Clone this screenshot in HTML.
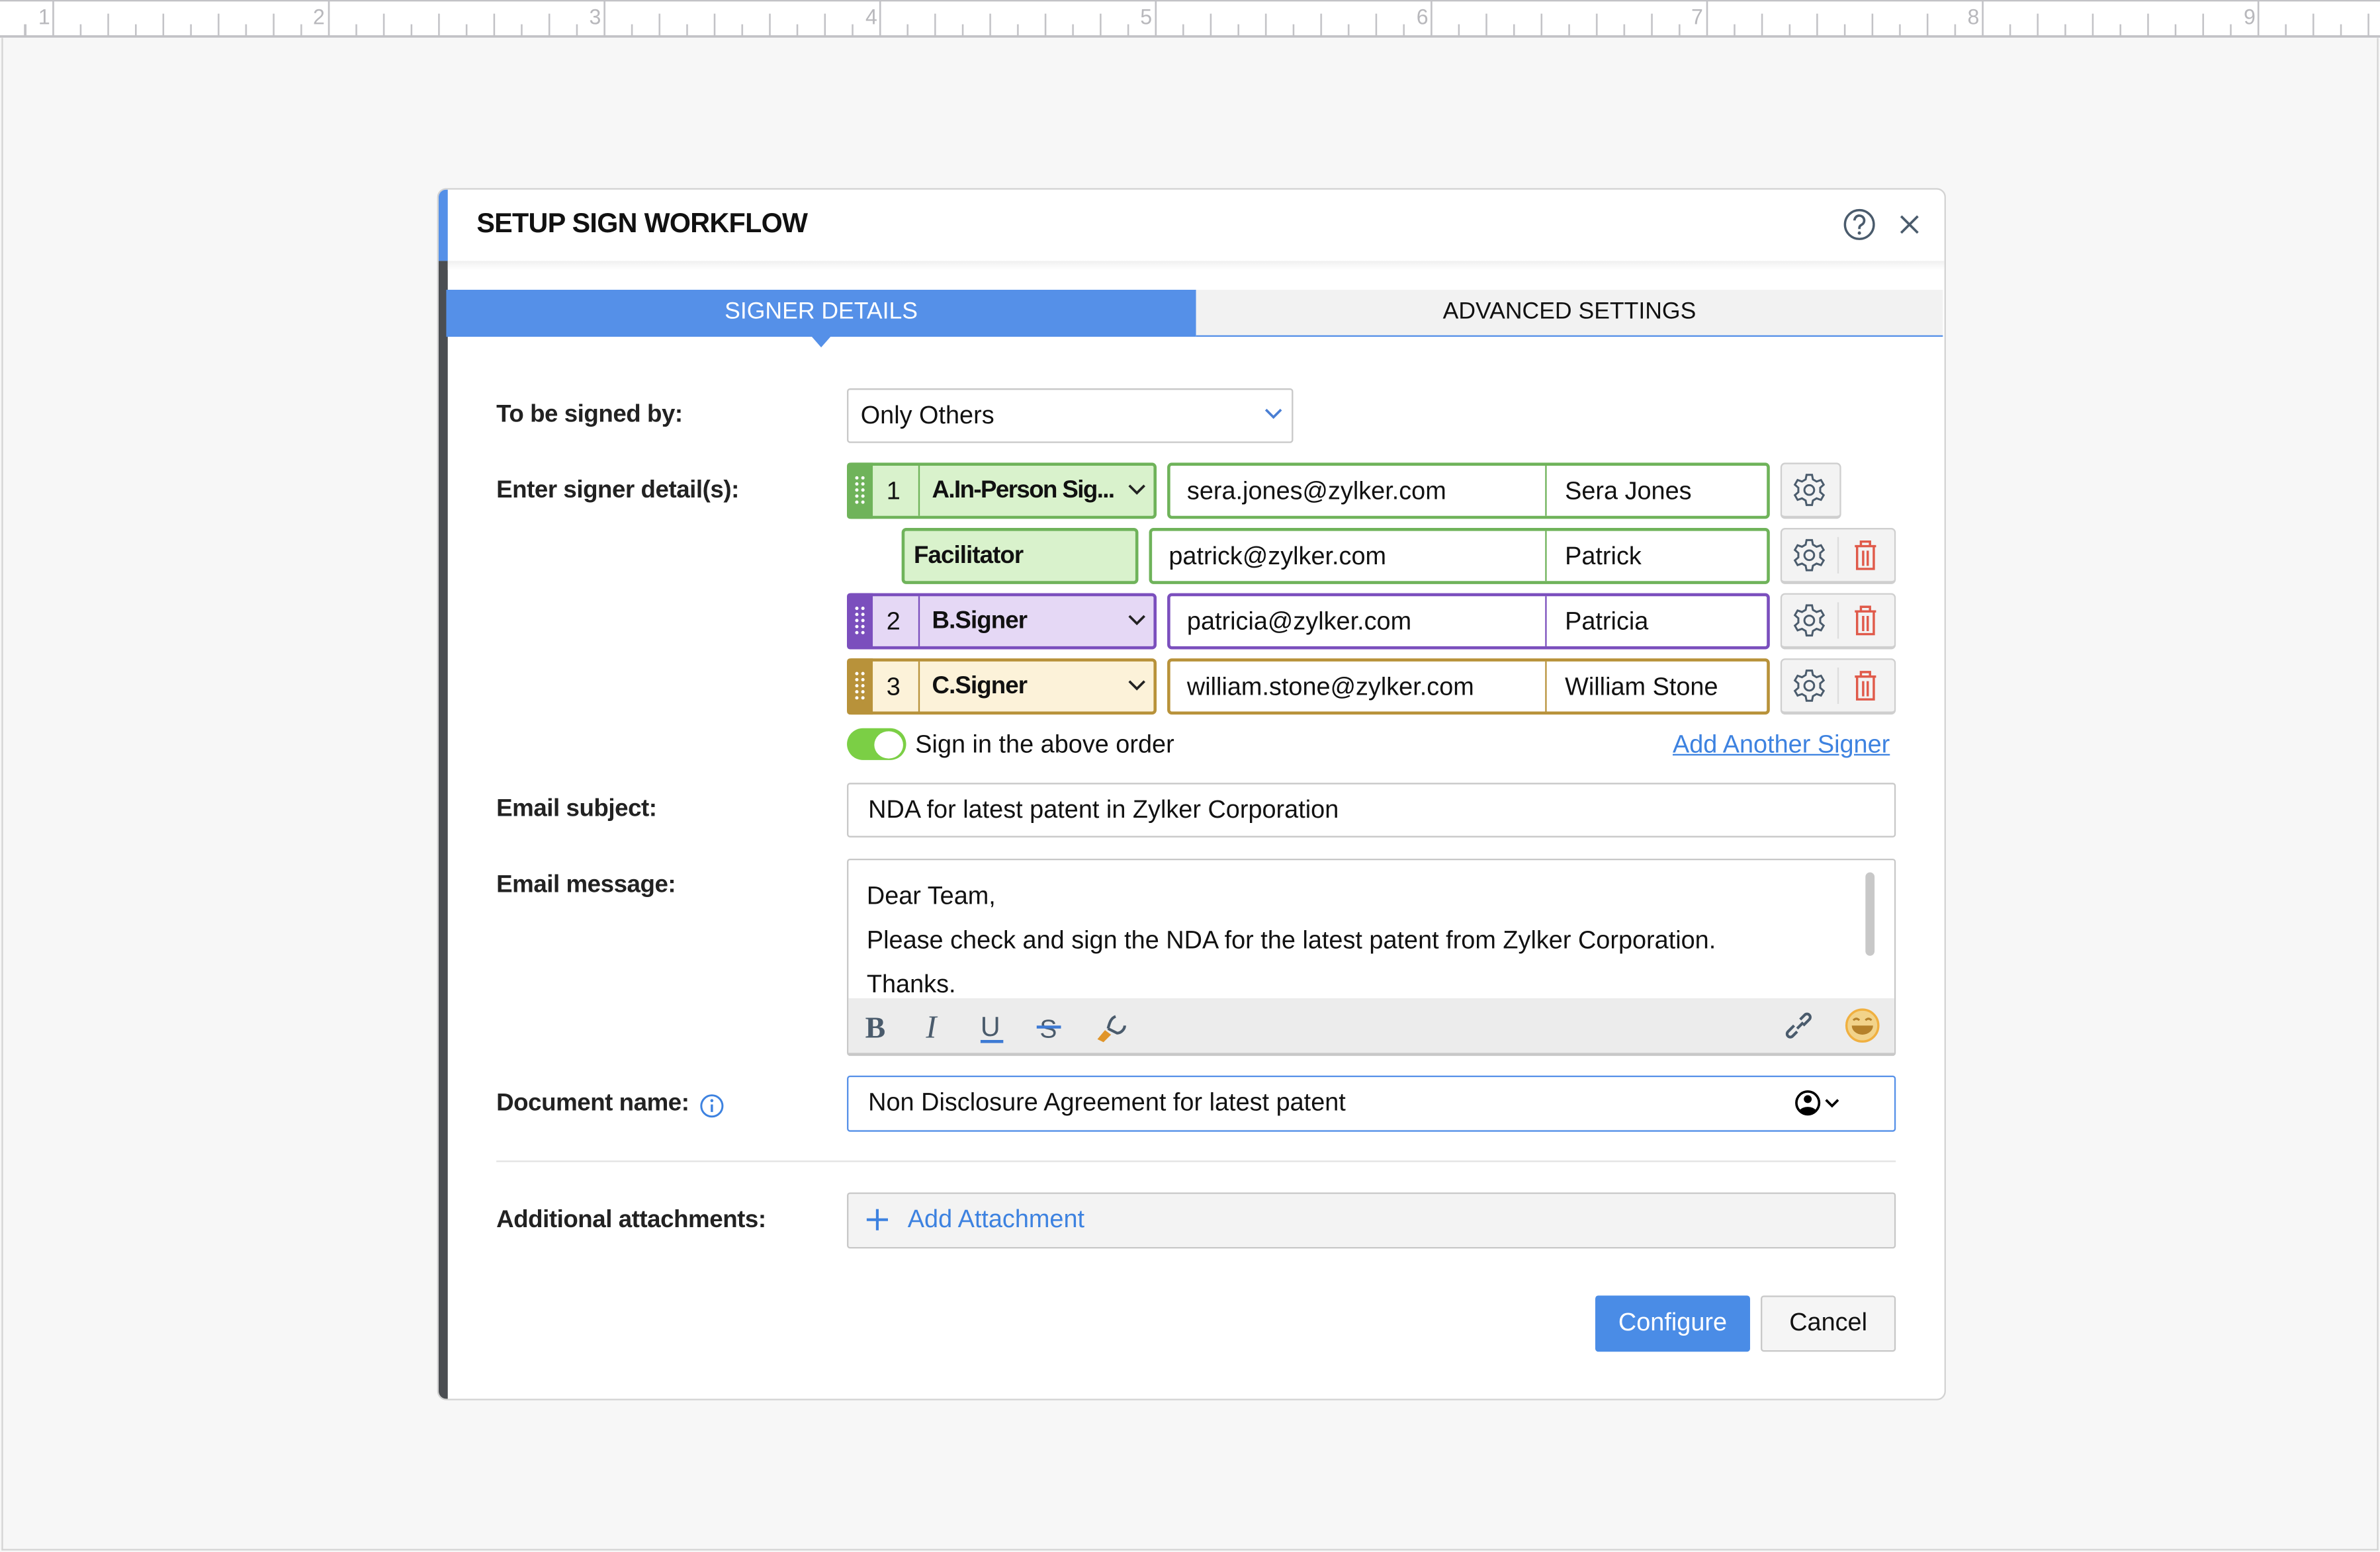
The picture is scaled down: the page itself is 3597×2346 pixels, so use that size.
<!DOCTYPE html>
<html><head><meta charset="utf-8">
<style>
*{box-sizing:border-box;margin:0;padding:0}
html,body{width:3597px;height:2346px;overflow:hidden;background:#f7f7f7}
#s{position:absolute;left:0;top:0;width:1568px;height:1023px;transform:scale(2.294,2.2932);transform-origin:0 0;font-family:"Liberation Sans",sans-serif;color:#111;background:#f7f7f7}
.a{position:absolute}
.lbl{position:absolute;left:327px;font-size:16px;font-weight:bold;color:#222;line-height:20px;letter-spacing:-0.2px}
.box{position:absolute;border:1px solid #c8c8c8;border-radius:2px;background:#fff;font-size:16.5px;line-height:34px;padding-left:13px;color:#111}
.t{position:absolute;font-size:16.5px;line-height:20px;color:#111}
.rb{font-weight:bold;font-size:16px;letter-spacing:-0.4px}
.act{position:absolute;border:1px solid #cfcfcf;border-bottom-width:2px;border-radius:3px;background:#f3f3f3}
</style></head><body><div id="s">
<svg class="a" style="left:0;top:0" width="1568" height="26">
<defs><pattern id="p" x="34.5" y="0" width="181.6" height="26" patternUnits="userSpaceOnUse">
<line x1="0.5" y1="0" x2="0.5" y2="24" stroke="#c2c2c6" stroke-width="1.3"/>
<g stroke="#c2c2c6" stroke-width="1.1">
<line x1="18.66" y1="16" x2="18.66" y2="24"/><line x1="36.8" y1="9" x2="36.8" y2="24"/>
<line x1="55" y1="16" x2="55" y2="24"/><line x1="73.1" y1="9" x2="73.1" y2="24"/>
<line x1="91.3" y1="16" x2="91.3" y2="24"/><line x1="109.5" y1="9" x2="109.5" y2="24"/>
<line x1="127.6" y1="16" x2="127.6" y2="24"/><line x1="145.8" y1="9" x2="145.8" y2="24"/>
<line x1="164" y1="16" x2="164" y2="24"/></g></pattern></defs>
<rect x="0" y="0" width="1568" height="24" fill="#fff"/>
<rect x="0" y="0" width="1568" height="24" fill="url(#p)"/>
<line x1="0" y1="0.5" x2="1568" y2="0.5" stroke="#c2c2c6"/>
<line x1="0" y1="24" x2="1568" y2="24" stroke="#c2c2c6" stroke-width="1.6"/>
<line x1="16.3" y1="16" x2="16.3" y2="24" stroke="#c2c2c6"/>
<g font-family="Liberation Sans" font-size="14" fill="#b8b8bc" text-anchor="end">
<text x="33" y="16">1</text><text x="214" y="16">2</text><text x="396" y="16">3</text><text x="578" y="16">4</text><text x="759" y="16">5</text><text x="941" y="16">6</text><text x="1122" y="16">7</text><text x="1304" y="16">8</text><text x="1486" y="16">9</text></g>
</svg>
<div class="a" style="left:1px;top:25px;width:1566px;height:997px;border:1px solid #d4d4d4;border-top:none"></div>

<div class="a" style="left:288px;top:124px;width:994px;height:799px;background:#fff;border:1px solid #d2d2d2;border-radius:6px;overflow:hidden">
  <div class="a" style="left:0;top:0;width:6px;height:47px;background:#5590e8"></div>
  <div class="a" style="left:0;top:47px;width:6px;height:760px;background:#4b4e52"></div>
  <div class="a" style="left:6px;top:47px;width:990px;height:6px;background:linear-gradient(#f0f0f0,#fff)"></div>
</div>
<div class="t" style="left:314px;top:137px;font-size:18px;font-weight:bold;letter-spacing:-0.3px">SETUP SIGN WORKFLOW</div>
<svg class="a" style="left:1213px;top:136px" width="60" height="24" viewBox="0 0 60 24">
<circle cx="12" cy="12" r="9.5" fill="none" stroke="#4a5b6c" stroke-width="1.5"/>
<path d="M8.8 9.3a3.2 3.2 0 1 1 4.6 2.9c-1 .5-1.4 1.1-1.4 2.2v.6" fill="none" stroke="#4a5b6c" stroke-width="1.6"/>
<circle cx="12" cy="17.6" r="1.1" fill="#4a5b6c"/>
<path d="M39.5 6.5l11 11M50.5 6.5l-11 11" stroke="#4a5b6c" stroke-width="1.6"/>
</svg>

<div class="a" style="left:294px;top:191px;width:494px;height:31px;background:#5590e8;color:#fff;text-align:center;font-size:15.5px;line-height:30px">SIGNER DETAILS</div>
<div class="a" style="left:534px;top:221px;width:0;height:0;border-left:7px solid transparent;border-right:7px solid transparent;border-top:8px solid #5590e8"></div>
<div class="a" style="left:788px;top:191px;width:492px;height:31px;background:#f2f2f2;border-bottom:1.5px solid #5590e8;color:#111;text-align:center;font-size:15.5px;line-height:30px">ADVANCED SETTINGS</div>

<div class="lbl" style="top:264px">To be signed by:</div>
<div class="box" style="left:558px;top:256px;width:294px;height:36px;padding-left:8px">Only Others</div>
<svg class="a" style="left:832px;top:268px" width="14" height="10"><path d="M2 2l5 5 5-5" fill="none" stroke="#4a7fd4" stroke-width="1.6"/></svg>

<div class="lbl" style="top:314px">Enter signer detail(s):</div>

<div class="a" style="left:558px;top:305px;width:204px;height:37px;border:2px solid #6fb35a;border-radius:3px;background:#d9f2cc"></div>
<div class="a" style="left:558px;top:305px;width:17px;height:37px;background:#6fb35a;border-radius:2px 0 0 2px"></div>
<div class="a" style="left:605px;top:307px;width:1px;height:33px;background:#6fb35a"></div>
<div class="t" style="left:584px;top:314px">1</div>
<div class="t rb" style="left:614px;top:314px;letter-spacing:-0.7px">A.In-Person Sig...</div>
<div class="a" style="left:769px;top:305px;width:397px;height:37px;border:2px solid #6fb35a;border-radius:3px"></div>
<div class="a" style="left:1018px;top:307px;width:1px;height:33px;background:#6fb35a"></div>
<div class="t" style="left:782px;top:314px">sera.jones@zylker.com</div>
<div class="t" style="left:1031px;top:314px">Sera Jones</div>
<div class="act" style="left:1173px;top:305px;width:40px;height:37px"></div>
<div class="a" style="left:594px;top:348px;width:156px;height:37px;border:2px solid #6fb35a;border-radius:3px;background:#d9f2cc"></div>
<div class="t rb" style="left:602px;top:357px">Facilitator</div>
<div class="a" style="left:757px;top:348px;width:409px;height:37px;border:2px solid #6fb35a;border-radius:3px"></div>
<div class="a" style="left:1018px;top:350px;width:1px;height:33px;background:#6fb35a"></div>
<div class="t" style="left:770px;top:357px">patrick@zylker.com</div>
<div class="t" style="left:1031px;top:357px">Patrick</div>
<div class="act" style="left:1173px;top:348px;width:76px;height:37px"></div>
<div class="a" style="left:558px;top:391px;width:204px;height:37px;border:2px solid #7b4fbd;border-radius:3px;background:#e5d8f5"></div>
<div class="a" style="left:558px;top:391px;width:17px;height:37px;background:#7b4fbd;border-radius:2px 0 0 2px"></div>
<div class="a" style="left:605px;top:393px;width:1px;height:33px;background:#7b4fbd"></div>
<div class="t" style="left:584px;top:400px">2</div>
<div class="t rb" style="left:614px;top:400px">B.Signer</div>
<div class="a" style="left:769px;top:391px;width:397px;height:37px;border:2px solid #7b4fbd;border-radius:3px"></div>
<div class="a" style="left:1018px;top:393px;width:1px;height:33px;background:#7b4fbd"></div>
<div class="t" style="left:782px;top:400px">patricia@zylker.com</div>
<div class="t" style="left:1031px;top:400px">Patricia</div>
<div class="act" style="left:1173px;top:391px;width:76px;height:37px"></div>
<div class="a" style="left:558px;top:434px;width:204px;height:37px;border:2px solid #b8923a;border-radius:3px;background:#fcf2d9"></div>
<div class="a" style="left:558px;top:434px;width:17px;height:37px;background:#b8923a;border-radius:2px 0 0 2px"></div>
<div class="a" style="left:605px;top:436px;width:1px;height:33px;background:#b8923a"></div>
<div class="t" style="left:584px;top:443px">3</div>
<div class="t rb" style="left:614px;top:443px">C.Signer</div>
<div class="a" style="left:769px;top:434px;width:397px;height:37px;border:2px solid #b8923a;border-radius:3px"></div>
<div class="a" style="left:1018px;top:436px;width:1px;height:33px;background:#b8923a"></div>
<div class="t" style="left:782px;top:443px">william.stone@zylker.com</div>
<div class="t" style="left:1031px;top:443px">William Stone</div>
<div class="act" style="left:1173px;top:434px;width:76px;height:37px"></div>

<svg class="a" style="left:0;top:0" width="1568" height="500">
<defs>
<g id="dots" fill="#fff"><circle cx="-2" cy="0" r="1.1"/><circle cx="2" cy="0" r="1.1"/><circle cx="-2" cy="4" r="1.1"/><circle cx="2" cy="4" r="1.1"/><circle cx="-2" cy="8" r="1.1"/><circle cx="2" cy="8" r="1.1"/><circle cx="-2" cy="12" r="1.1"/><circle cx="2" cy="12" r="1.1"/><circle cx="-2" cy="16" r="1.1"/><circle cx="2" cy="16" r="1.1"/></g>
<g id="gear" fill="none" stroke="#4a5b6c" stroke-width="1.3"><path d="M-1.8-10h3.6l.6 3 2.4 1.4 2.9-1 1.8 3.1-2.3 2v2.9l2.3 2-1.8 3.1-2.9-1-2.4 1.4-.6 3h-3.6l-.6-3-2.4-1.4-2.9 1-1.8-3.1 2.3-2v-2.9l-2.3-2 1.8-3.1 2.9 1 2.4-1.4z"/><circle r="3.2"/></g>
<g id="trash" fill="none" stroke="#e05a4a" stroke-width="1.5"><path d="M-7-6h14M-3-6v-3h6v3M-5.5-6v15h11v-15M-1.5-3v10M1.5-3v10"/></g>
<path id="chev" d="M-5-2l5 5 5-5" fill="none" stroke="#222" stroke-width="1.6"/>
</defs>
<use href="#dots" x="566.5" y="315"/><use href="#dots" x="566.5" y="401"/><use href="#dots" x="566.5" y="444"/>
<use href="#chev" x="749" y="322"/><use href="#chev" x="749" y="408"/><use href="#chev" x="749" y="451"/>
<use href="#gear" x="1192" y="323"/><use href="#gear" x="1192" y="366"/><use href="#gear" x="1192" y="409"/><use href="#gear" x="1192" y="452"/>
<line x1="1211" y1="354" x2="1211" y2="378" stroke="#ddd"/><line x1="1211" y1="397" x2="1211" y2="421" stroke="#ddd"/><line x1="1211" y1="440" x2="1211" y2="464" stroke="#ddd"/>
<use href="#trash" x="1229" y="366"/><use href="#trash" x="1229" y="409"/><use href="#trash" x="1229" y="452"/>
</svg>

<div class="a" style="left:558px;top:480px;width:39px;height:21px;border-radius:11px;background:#7bcf45"></div>
<div class="a" style="left:576px;top:481.5px;width:19px;height:18px;border-radius:50%;background:#fff"></div>
<div class="t" style="left:603px;top:481px">Sign in the above order</div>
<div class="t" style="left:1102px;top:481px;color:#3d82e0;text-decoration:underline">Add Another Signer</div>

<div class="lbl" style="top:524px">Email subject:</div>
<div class="box" style="left:558px;top:516px;width:691px;height:36px">NDA for latest patent in Zylker Corporation</div>

<div class="lbl" style="top:574px">Email message:</div>
<div class="a" style="left:558px;top:566px;width:691px;height:130px;border:1px solid #c8c8c8;border-bottom-width:2px;border-radius:2px;background:#fff;overflow:hidden">
  <div class="t" style="left:12px;top:14px">Dear Team,</div>
  <div class="t" style="left:12px;top:43px">Please check and sign the NDA for the latest patent from Zylker Corporation.</div>
  <div class="t" style="left:12px;top:72px">Thanks.</div>
  <div class="a" style="left:670px;top:8px;width:6px;height:55px;border-radius:3px;background:#c8c8c8"></div>
  <div class="a" style="left:0;top:91px;width:691px;height:40px;background:#ececec"></div>
</div>
<svg class="a" style="left:558px;top:658px" width="691" height="36">
<text x="12" y="26" font-family="Liberation Serif" font-weight="bold" font-size="20" fill="#4a5b6c">B</text>
<text x="52" y="26" font-family="Liberation Serif" font-style="italic" font-size="21" fill="#4a5b6c">I</text>
<text x="88" y="25" font-family="Liberation Sans" font-size="18" fill="#4a5b6c">U</text>
<line x1="88" y1="28.5" x2="103" y2="28.5" stroke="#3d7ad4" stroke-width="2"/>
<text x="127" y="26" font-family="Liberation Sans" font-size="17" fill="#4a5b6c">S</text>
<line x1="125" y1="19" x2="141" y2="19" stroke="#3d7ad4" stroke-width="2"/>
<path d="M177 12c-3 1-4 4-5 8M172 20l6 3c3 0 5-3 5-5" fill="none" stroke="#4a5b6c" stroke-width="1.8"/>
<path d="M165 27l5-6 4 3-5 5z" fill="#e0952a"/>
<path d="M626 22l-3 3a2 2 0 0 1-3-3l4-4M628 14l3-3a2 2 0 0 1 3 3l-4 4M626 20l4-4" fill="none" stroke="#4a5b6c" stroke-width="1.8"/>
<circle cx="669" cy="18" r="10.5" fill="#f2d38a" stroke="#f0b040" stroke-width="1.5"/>
<path d="M662 18h14a7 6 0 0 1-14 0z" fill="#b5812a"/>
<path d="M663 14.5q2-2 4 0M671 14.5q2-2 4 0" fill="none" stroke="#b5812a" stroke-width="1.3"/>
</svg>

<div class="lbl" style="top:718px">Document name:</div>
<svg class="a" style="left:460px;top:720px" width="18" height="18"><circle cx="9" cy="9" r="7" fill="none" stroke="#3d82e0" stroke-width="1.3"/><path d="M9 8v5" stroke="#3d82e0" stroke-width="1.5"/><circle cx="9" cy="5.5" r="1" fill="#3d82e0"/></svg>
<div class="box" style="left:558px;top:709px;width:691px;height:37px;border:1.5px solid #5590e8">Non Disclosure Agreement for latest patent</div>
<svg class="a" style="left:1180px;top:717px" width="36" height="20"><circle cx="11" cy="10" r="7.5" fill="none" stroke="#000" stroke-width="1.6"/><circle cx="11" cy="7.5" r="2.6" fill="#000"/><path d="M5.5 15a6 4 0 0 1 11 0a7.5 7.5 0 0 1-11 0z" fill="#000"/><path d="M23 8l4 4 4-4" fill="none" stroke="#000" stroke-width="1.6"/></svg>

<div class="a" style="left:327px;top:765px;width:922px;height:1px;background:#e2e2e2"></div>

<div class="lbl" style="top:795px">Additional attachments:</div>
<div class="box" style="left:558px;top:786px;width:691px;height:37px;background:#f3f3f3;color:#3d82e0;padding-left:39px">Add Attachment</div>
<svg class="a" style="left:570px;top:796px" width="16" height="16"><path d="M8 1v14M1 8h14" stroke="#3d82e0" stroke-width="1.8"/></svg>

<div class="a" style="left:1051px;top:854px;width:102px;height:37px;background:#4a8ce6;border-radius:2px;color:#fff;font-size:16.5px;line-height:37px;text-align:center">Configure</div>
<div class="a" style="left:1160px;top:854px;width:89px;height:37px;background:#f5f5f5;border:1px solid #c8c8c8;border-radius:2px;color:#111;font-size:16.5px;line-height:35px;text-align:center">Cancel</div>
</div></body></html>
